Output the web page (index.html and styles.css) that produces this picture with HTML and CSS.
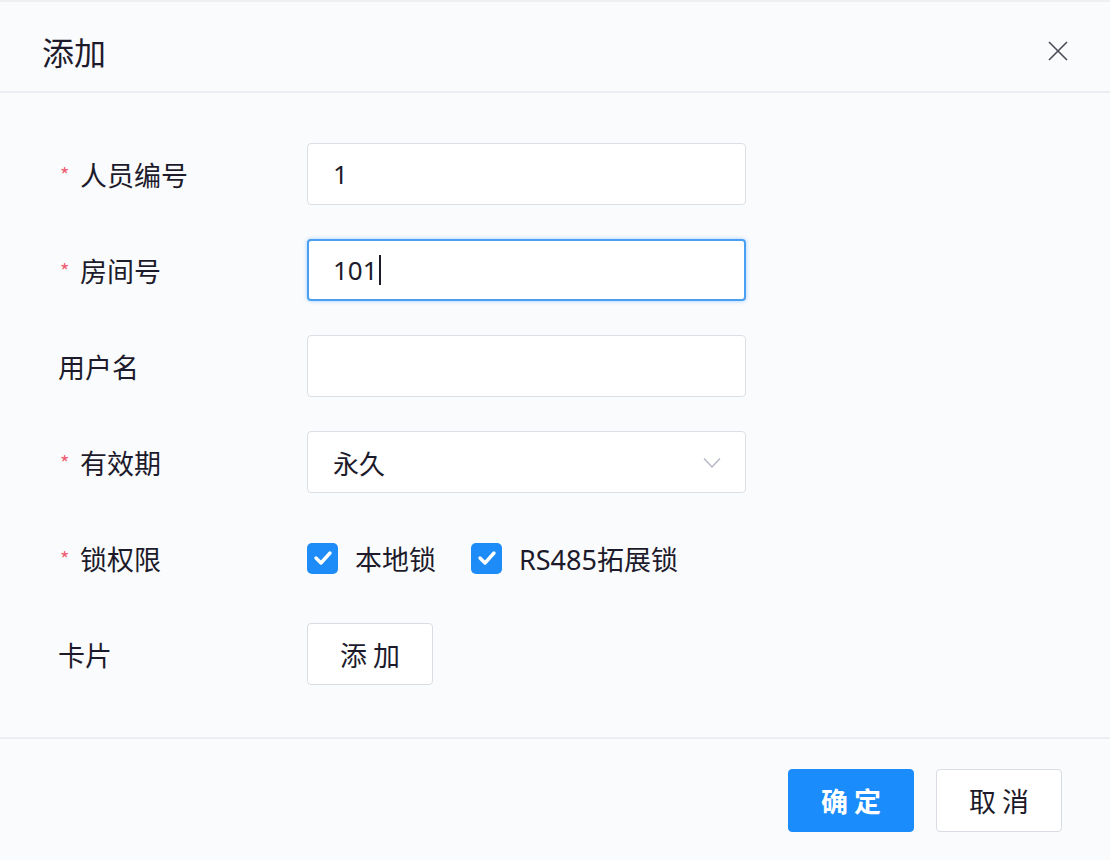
FILE: index.html
```html
<!DOCTYPE html>
<html lang="zh-CN">

<head>
    <meta charset="UTF-8">
    <meta name="viewport" content="width=device-width, initial-scale=1.0">
    <title>添加</title>
    <link rel="stylesheet" href="styles.css">
</head>

<body>
    <div class="dialog">
        <div class="dialog-header">
            <span class="dialog-title">添加</span>
            <svg class="close" width="20" height="20" viewBox="0 0 20 20">
                <path d="M1 1L19 19M19 1L1 19" stroke="#4a4a55" stroke-width="1.6" fill="none" />
            </svg>
        </div>

        <div class="dialog-body">
            <div class="form-row">
                <label class="label required">人员编号</label>
                <div class="field">1</div>
            </div>
            <div class="form-row">
                <label class="label required">房间号</label>
                <div class="field focused">101<span class="caret"></span></div>
            </div>
            <div class="form-row">
                <label class="label">用户名</label>
                <div class="field"></div>
            </div>
            <div class="form-row">
                <label class="label required">有效期</label>
                <div class="field select">
                    <span>永久</span>
                    <svg class="arrow" width="18" height="12" viewBox="0 0 18 12">
                        <path d="M1 1.5L9 10L17 1.5" stroke="#b4b8c2" stroke-width="1.4" fill="none" />
                    </svg>
                </div>
            </div>
            <div class="form-row">
                <label class="label required">锁权限</label>
                <div class="checks">
                    <span class="check">
                        <span class="box">
                            <svg width="20" height="16" viewBox="0 0 20 16">
                                <path d="M3 8L8 13L17 3" stroke="#fff" stroke-width="3.4" fill="none" stroke-linecap="round" stroke-linejoin="round" />
                            </svg>
                        </span>
                        本地锁
                    </span>
                    <span class="check">
                        <span class="box">
                            <svg width="20" height="16" viewBox="0 0 20 16">
                                <path d="M3 8L8 13L17 3" stroke="#fff" stroke-width="3.4" fill="none" stroke-linecap="round" stroke-linejoin="round" />
                            </svg>
                        </span>
                        RS485拓展锁
                    </span>
                </div>
            </div>
            <div class="form-row">
                <label class="label">卡片</label>
                <button class="btn">添 加</button>
            </div>
        </div>

        <div class="dialog-footer">
            <button class="btn primary">确 定</button>
            <button class="btn">取 消</button>
        </div>
    </div>
</body>

</html>
```

FILE: styles.css
```css
* {
    box-sizing: border-box;
}

body {
    margin: 0;
    background: #f9fafd;
    font-family: "Noto Sans", "Noto Sans CJK SC", sans-serif;
    color: #1d1b2b;
}

.dialog {
    width: 1110px;
    height: 860px;
    display: flex;
    flex-direction: column;
    background: #fafbfd;
    border-top: 2px solid #eef0f4;
}

.dialog-header {
    height: 91px;
    display: flex;
    align-items: center;
    justify-content: space-between;
    padding: 8px 42px 0 42px;
    border-bottom: 2px solid #eaedf2;
}

.dialog-title {
    font-size: 32px;
    font-family: "Noto Sans CJK SC", sans-serif;
    color: #1d1b2b;
}

.dialog-body {
    flex: 1;
    display: flex;
    flex-direction: column;
    gap: 34px;
    padding: 50px 0 0 58px;
    border-bottom: 2px solid #eceef3;
}

.form-row {
    display: flex;
    align-items: center;
    height: 62px;
}

.label {
    width: 249px;
    font-size: 27px;
    font-family: "Noto Sans CJK SC", sans-serif;
    display: flex;
    align-items: center;
}

.label.required::before {
    content: "*";
    color: #ee5d70;
    font-size: 20px;
    width: 20px;
    padding-left: 2px;
}

.field {
    width: 439px;
    height: 62px;
    border: 1px solid #dcdfe6;
    border-radius: 4px;
    background: #fff;
    padding: 0 25px;
    display: flex;
    align-items: center;
    font-size: 26px;
}

.field.focused {
    border: 2px solid #4b9ff2;
    box-shadow: 0 0 4px rgba(64, 158, 255, 0.45);
    padding-left: 24px;
}

.caret {
    display: inline-block;
    width: 2px;
    height: 30px;
    background: #1d1b2b;
    margin-left: 1px;
}

.select {
    justify-content: space-between;
    font-family: "Noto Sans CJK SC", sans-serif;
    padding-right: 24px;
}

.arrow {
    margin-top: 2px;
}

.checks {
    display: flex;
    gap: 35px;
}

.check {
    display: flex;
    align-items: center;
    gap: 17px;
    font-size: 27px;
    font-family: "Noto Sans", "Noto Sans CJK SC", sans-serif;
}

.box {
    width: 31px;
    height: 31px;
    border-radius: 5px;
    background: #1d8cf8;
    display: flex;
    align-items: center;
    justify-content: center;
}

.btn {
    width: 126px;
    height: 62px;
    border: 1px solid #d9dce3;
    border-radius: 4px;
    background: #fff;
    color: #1d1b2b;
    font-size: 27px;
    font-family: "Noto Sans CJK SC", sans-serif;
}

.btn.primary {
    background: #1a8cfb;
    border-color: #1a8cfb;
    color: #fff;
    font-weight: bold;
}

.dialog-footer {
    height: 121px;
    display: flex;
    justify-content: flex-end;
    align-items: flex-start;
    gap: 22px;
    padding: 30px 48px 0 0;
}

.dialog-footer .btn {
    height: 63px;
}
```
